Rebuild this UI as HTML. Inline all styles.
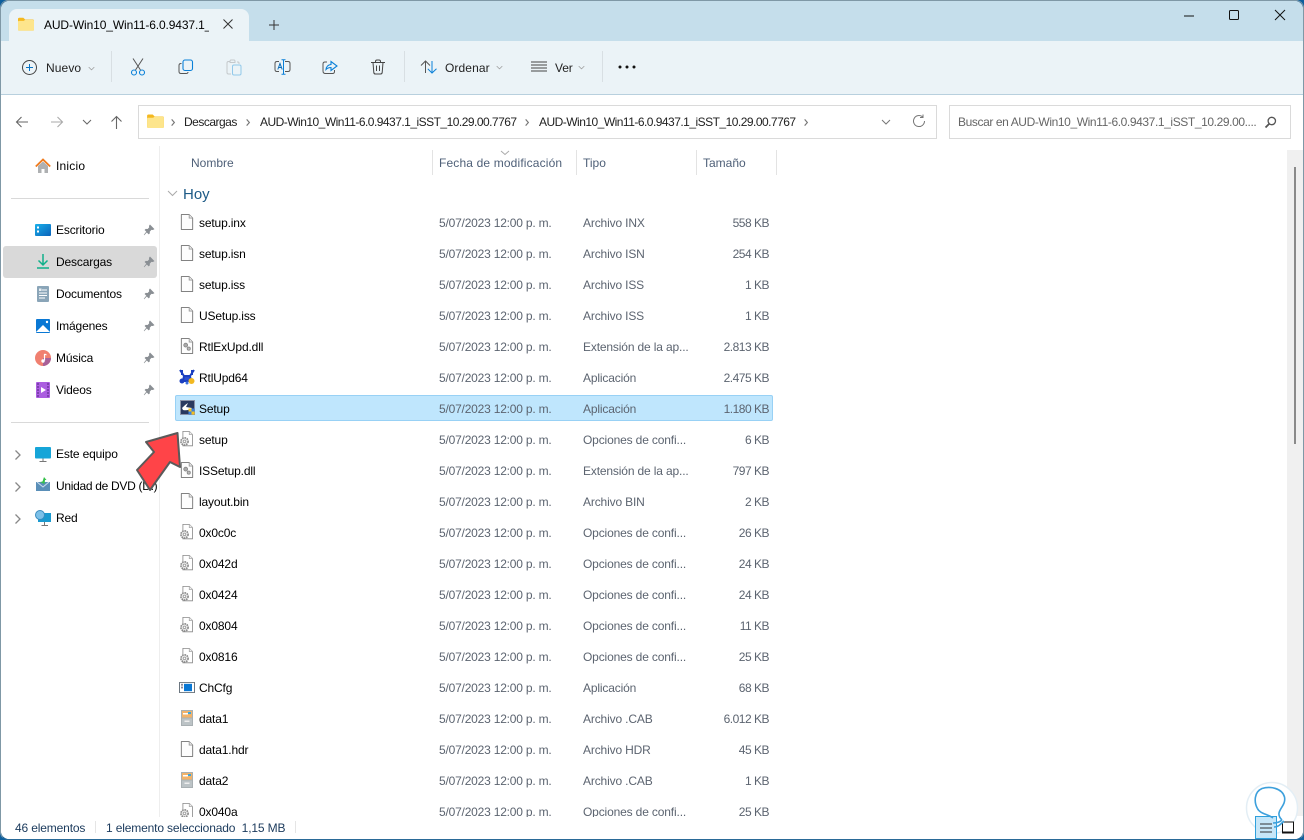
<!DOCTYPE html>
<html lang="es"><head><meta charset="utf-8"><title>Explorador</title>
<style>
html,body{margin:0;padding:0;width:1304px;height:840px;overflow:hidden;background:#0d5f9e}
*{box-sizing:border-box}
body{font-family:"Liberation Sans",sans-serif;font-size:12px;color:#000;position:relative}
.a{position:absolute;white-space:nowrap}
#win{position:absolute;left:1px;top:1px;width:1302px;height:838px;background:#fff;border-radius:8px;overflow:hidden}
#frame{position:absolute;left:0;top:0;width:1304px;height:840px;border:1px solid #7f98a6;border-bottom:1px solid #2a6a98;border-radius:8px;pointer-events:none}
.t{position:absolute;white-space:nowrap;line-height:16px;letter-spacing:-.15px}
.n{left:199px}.d{left:439px;color:#5c6470;letter-spacing:-.2px}.y{left:583px;color:#5c6470}.s{left:669px;width:100px;text-align:right;color:#5c6470;letter-spacing:-.5px}
.h{color:#4f6078;top:155px;letter-spacing:0}
.sep{position:absolute;width:1px;top:150px;height:25px;background:#e3e3e3}
.ic{position:absolute}
.pin{position:absolute;left:143px}
.f{position:absolute;left:180px;width:14px;height:16px}
.c{position:absolute;left:179px;width:15px;height:16px}
</style></head><body>
<svg width="0" height="0" style="position:absolute">
<symbol id="file" viewBox="0 0 16 18"><path d="M1.500 .5H10.500L14.500 4.500V17.500H1.500Z" fill="#fdfdfd" stroke="#707070" stroke-linejoin="round"/><path d="M10.500 .5V4.500H14.500" fill="#eee" stroke="#999"/></symbol>
<symbol id="dll" viewBox="0 0 16 18"><path d="M1.500 .5H10.500L14.500 4.500V17.500H1.500Z" fill="#fdfdfd" stroke="#707070" stroke-linejoin="round"/><path d="M10.500 .5V4.500H14.500" fill="#eee" stroke="#999"/><circle cx="6.500" cy="8" r="2.200" fill="#aaa" stroke="#888"/><circle cx="10" cy="12" r="1.800" fill="#bbb" stroke="#888"/></symbol>
<symbol id="cfg" viewBox="0 0 18 20"><path d="M4.500 .5H12.500L16.500 4.500V18.500H4.500Z" fill="#fff" stroke="#888"/><path d="M12.500 .5V4.500H16.500" fill="#eee" stroke="#aaa"/><circle cx="6.500" cy="13" r="4.500" fill="#e8e8e8" stroke="#888" stroke-width="2" stroke-dasharray="2 1"/><circle cx="6.500" cy="13" r="1.600" fill="#fff" stroke="#999"/></symbol>
<symbol id="cab" viewBox="0 0 12 16"><rect width="12" height="16" fill="#a9b0b3"/><rect x="1" y="1" width="10" height="6.500" fill="#f2b36a"/><rect x="2" y="3" width="5" height="1.500" fill="#fff"/><rect x="7" y="2" width="3" height="2" fill="#38a6e0"/><rect x="1" y="8.500" width="10" height="6.500" fill="#bcc3c6"/><rect x="3.500" y="10.500" width="5" height="1.500" fill="#eee"/></symbol>
<symbol id="pin" viewBox="0 0 12 12"><path d="M7 1L11 5L9.800 5.700L8.300 5.500L6.500 7.500L6.500 9.300L5.700 10L3.800 8.100L1.200 10.800L1 11L3.700 7.600L2 6L2.800 5.200L4.700 5.300L6.500 3.500L6.300 2Z" fill="#8a8f94" stroke="#8a8f94" stroke-width=".6"/></symbol>
<symbol id="folder" viewBox="0 0 18 15"><path d="M0 2Q0 .5 1.500 .5H6L8 2.500H16.500Q18 2.500 18 4V13.500Q18 15 16.500 15H1.500Q0 15 0 13.500Z" fill="#f4b81f"/><path d="M0 5Q0 4 1 4H6.500L8 2.800H16.500Q18 2.800 18 4.300V13.500Q18 15 16.500 15H1.500Q0 15 0 13.500Z" fill="#fde58c"/></symbol>
<symbol id="chev" viewBox="0 0 10 6"><path d="M1 1L5 5L9 1" fill="none" stroke="#999" stroke-width="1"/></symbol>
<symbol id="crumb" viewBox="0 0 6 10"><path d="M1.500 1.500L4.500 5L1.500 8.500" fill="none" stroke="#777" stroke-width="1.300"/></symbol>
<symbol id="side" viewBox="0 0 8 12"><path d="M1.500 1.500L6 6L1.500 10.500" fill="none" stroke="#888" stroke-width="1.300"/></symbol>
</svg>
<div id="win">
<div class="a" style="left:-1px;top:-1px;width:1304px;height:41px;background:#c5deeb"></div>
<div class="a" style="left:-1px;top:40px;width:1304px;height:54px;background:#ebf3f7;border-bottom:1px solid #b8d0de"></div>
<div class="a" style="left:8px;top:8px;width:240px;height:32px;background:#ebf3f7;border-radius:8px 8px 0 0"></div>
</div>
<div id="frame"></div>

<!-- tab -->
<svg class="ic" style="left:18px;top:17px" width="16" height="14"><use href="#folder"/></svg>
<div class="t" style="left:44px;top:17px;font-size:12px;letter-spacing:-.12px;width:165px;overflow:hidden">AUD-Win10_Win11-6.0.9437.1_</div>
<svg class="ic" style="left:222px;top:18px" width="12" height="12"><path d="M1.500 1.500L10.500 10.500M10.500 1.500L1.500 10.500" stroke="#333" stroke-width="1" fill="none"/></svg>
<svg class="ic" style="left:268px;top:19px" width="12" height="12"><path d="M6 1V11M1 6H11" stroke="#333" stroke-width="1" fill="none"/></svg>

<!-- window controls -->
<svg class="ic" style="left:1183px;top:15px" width="12" height="2"><path d="M1 1H11" stroke="#111" stroke-width="1"/></svg>
<svg class="ic" style="left:1228px;top:9px" width="12" height="12"><rect x="1.500" y="1.500" width="9" height="9" rx="1" fill="none" stroke="#111"/></svg>
<svg class="ic" style="left:1274px;top:9px" width="12" height="12"><path d="M1 1L11 11M11 1L1 11" stroke="#111" stroke-width="1" fill="none"/></svg>

<!-- toolbar -->
<svg class="ic" style="left:21px;top:59px" width="17" height="17"><circle cx="8.500" cy="8.500" r="7" fill="none" stroke="#444"/><path d="M8.500 5V12M5 8.500H12" stroke="#0a74c4" stroke-width="1"/></svg>
<div class="t" style="left:46px;top:60px;color:#222;letter-spacing:.1px">Nuevo</div>
<svg class="ic" style="left:88px;top:66px" width="7" height="5"><use href="#chev"/></svg>
<div class="a" style="left:111px;top:51px;width:1px;height:31px;background:#d8dfe3"></div>
<svg class="ic" style="left:130px;top:58px" width="16" height="18"><path d="M3 .5L10.500 12M13 .5L5.500 12" stroke="#555" fill="none"/><circle cx="4" cy="14.500" r="2.500" fill="none" stroke="#0a80d8" stroke-width="1.100"/><circle cx="12" cy="14.500" r="2.500" fill="none" stroke="#0a80d8" stroke-width="1.100"/></svg>
<svg class="ic" style="left:178px;top:59px" width="16" height="16"><rect x="5" y="1" width="9.500" height="10.500" rx="2" fill="none" stroke="#0a80d8" stroke-width="1.100"/><path d="M3.500 4.500H3Q1 4.500 1 6.500V12.500Q1 14.500 3 14.500H8Q10 14.500 10 13" fill="none" stroke="#555"/></svg>
<svg class="ic" style="left:226px;top:59px" width="16" height="17"><path d="M4 2.500H2.500Q1 2.500 1 4V13.500Q1 15 2.500 15H5" fill="none" stroke="#c4c8cb"/><path d="M4 2.500Q4 1 5 1H8Q9 1 9 2.500V3.500H4Z" fill="none" stroke="#c4c8cb"/><path d="M11 3H12Q13 3 13 4V5" fill="none" stroke="#c4c8cb"/><rect x="6.500" y="6" width="8.500" height="10" rx="1.500" fill="none" stroke="#92c8ea"/></svg>
<svg class="ic" style="left:274px;top:59px" width="17" height="16"><path d="M5 2.500H3Q1 2.500 1 4.500V10.500Q1 12.500 3 12.500H5M11 2.500H14Q16 2.500 16 4.500V10.500Q16 12.500 14 12.500H11" fill="none" stroke="#555"/><path d="M9.500 1V15M7.500 .7H11.500M7.500 15.300H11.500" stroke="#0a80d8" fill="none"/><path d="M3.800 10.500L6 4.500L8.200 10.500M4.600 8.500H7.400" stroke="#0a6cb8" fill="none"/></svg>
<svg class="ic" style="left:322px;top:59px" width="16" height="16"><path d="M5 3H3Q1 3 1 5V12Q1 14.500 3.500 14.500H10.500Q12.500 14.500 12.500 12.500V11" fill="none" stroke="#555"/><path d="M4 10.500Q4.500 6 9 5.500V2.500L15 7L9 11.500V8.500Q6 8.500 4 10.500Z" fill="none" stroke="#0a80d8" stroke-width="1.100"/></svg>
<svg class="ic" style="left:370px;top:59px" width="16" height="16"><path d="M1 3.500H15M5.500 3.500V2.500Q5.500 1 7 1H9Q10.500 1 10.500 2.500V3.500M3 3.500L3.800 13.500Q4 15 5.500 15H10.500Q12 15 12.200 13.500L13 3.500M6.500 6.500V12M9.500 6.500V12" fill="none" stroke="#444"/></svg>
<div class="a" style="left:404px;top:51px;width:1px;height:31px;background:#d8dfe3"></div>
<svg class="ic" style="left:420px;top:60px" width="18" height="14"><path d="M5.500 13V1M1 5.500L5.500 1L10 5.500" fill="none" stroke="#555"/><path d="M12 1V13M7.800 8.800L12 13L16.500 8.800" fill="none" stroke="#0a80d8"/></svg>
<div class="t" style="left:445px;top:60px;color:#222;letter-spacing:.1px">Ordenar</div>
<svg class="ic" style="left:496px;top:65px" width="7" height="5"><use href="#chev"/></svg>
<svg class="ic" style="left:531px;top:61px" width="16" height="11"><path d="M0 1H16M0 4H16M0 7H16M0 10H16" stroke="#444" stroke-width=".9"/></svg>
<div class="t" style="left:555px;top:60px;color:#222">Ver</div>
<svg class="ic" style="left:578px;top:65px" width="7" height="5"><use href="#chev"/></svg>
<div class="a" style="left:602px;top:51px;width:1px;height:31px;background:#d8dfe3"></div>
<svg class="ic" style="left:618px;top:65px" width="18" height="4"><circle cx="2" cy="2" r="1.500" fill="#111"/><circle cx="9" cy="2" r="1.500" fill="#111"/><circle cx="16" cy="2" r="1.500" fill="#111"/></svg>

<!-- nav buttons -->
<svg class="ic" style="left:15px;top:115px" width="14" height="14"><path d="M13 7H1.500M6.500 2L1.500 7L6.500 12" fill="none" stroke="#666" stroke-width="1.100"/></svg>
<svg class="ic" style="left:50px;top:115px" width="14" height="14"><path d="M1 7H12.500M7.500 2L12.500 7L7.500 12" fill="none" stroke="#aaa" stroke-width="1.100"/></svg>
<svg class="ic" style="left:82px;top:119px" width="10" height="6"><path d="M1 1L5 5L9 1" fill="none" stroke="#666" stroke-width="1"/></svg>
<svg class="ic" style="left:110px;top:115px" width="13" height="14"><path d="M6.500 14V1.500M1.500 6.500L6.500 1.500L11.500 6.500" fill="none" stroke="#666" stroke-width="1.100"/></svg>

<!-- address -->
<div class="a" style="left:138px;top:105px;width:799px;height:34px;border:1px solid #dadada;background:#fff"></div>
<svg class="ic" style="left:147px;top:114px" width="17" height="14"><use href="#folder"/></svg>
<svg class="ic" style="left:170px;top:118px" width="6" height="9"><use href="#crumb"/></svg>
<div class="t" style="left:184px;top:114px;color:#222;letter-spacing:-.5px">Descargas</div>
<svg class="ic" style="left:245px;top:118px" width="6" height="9"><use href="#crumb"/></svg>
<div class="t" style="left:260px;top:114px;color:#222;letter-spacing:-.52px">AUD-Win10_Win11-6.0.9437.1_iSST_10.29.00.7767</div>
<svg class="ic" style="left:524px;top:118px" width="6" height="9"><use href="#crumb"/></svg>
<div class="t" style="left:539px;top:114px;color:#222;letter-spacing:-.52px">AUD-Win10_Win11-6.0.9437.1_iSST_10.29.00.7767</div>
<svg class="ic" style="left:803px;top:118px" width="6" height="9"><use href="#crumb"/></svg>
<svg class="ic" style="left:881px;top:119px" width="10" height="6"><path d="M1 1L5 5L9 1" fill="none" stroke="#777"/></svg>
<svg class="ic" style="left:912px;top:114px" width="14" height="14"><path d="M12.500 7A5.500 5.500 0 1 1 10.500 2.800M11 .5V3.500H8" fill="none" stroke="#777"/></svg>
<div class="a" style="left:949px;top:105px;width:342px;height:34px;border:1px solid #dadada;background:#fff"></div>
<div class="t" style="left:958px;top:114px;color:#666;letter-spacing:-.4px">Buscar en AUD-Win10_Win11-6.0.9437.1_iSST_10.29.00....</div>
<svg class="ic" style="left:1264px;top:116px" width="13" height="13"><circle cx="7.800" cy="5" r="3.700" fill="none" stroke="#555" stroke-width="1.300"/><path d="M5 8L1.500 11.500" stroke="#555" stroke-width="1.800"/></svg>

<!-- sidebar -->
<div class="a" style="left:159px;top:146px;width:1px;height:671px;background:#eeeeee"></div>
<div class="a" style="left:3px;top:246px;width:154px;height:32px;background:#d9d9d9;border-radius:3px"></div>
<div class="a" style="left:11px;top:198px;width:138px;height:1px;background:#d9d9d9"></div>
<div class="a" style="left:11px;top:422px;width:138px;height:1px;background:#d9d9d9"></div>

<svg class="ic" style="left:35px;top:158px" width="16" height="16" viewBox="0 0 16 16"><path d="M3 8V15H6.500V11H9.500V15H13V8L8 3.500Z" fill="#aeb0b2"/><path d="M.8 8.500L8 1.500L15.200 8.500" fill="none" stroke="#f07a1c" stroke-width="1.800"/></svg>
<div class="t" style="left:56px;top:158px;letter-spacing:.2px">Inicio</div>

<svg class="ic" style="left:35px;top:224px" width="16" height="12"><defs><linearGradient id="dsk" x1="0" x2="1" y1="0" y2="1"><stop offset="0" stop-color="#1ab0ea"/><stop offset="1" stop-color="#0a62ba"/></linearGradient></defs><rect width="16" height="12" rx="1" fill="url(#dsk)"/><rect x="2" y="2.500" width="2" height="2" fill="#fff"/><rect x="2" y="6.500" width="2" height="2" fill="#fff"/></svg>
<div class="t" style="left:56px;top:222px">Escritorio</div>

<svg class="ic" style="left:37px;top:254px" width="12" height="15"><path d="M6 0V11M1.500 6.500L6 11L10.500 6.500" fill="none" stroke="#10b08a" stroke-width="1.500"/><path d="M0 14H12" stroke="#10b08a" stroke-width="1.500"/></svg>
<div class="t" style="left:56px;top:254px">Descargas</div>

<svg class="ic" style="left:37px;top:286px" width="12" height="16"><rect width="12" height="16" rx="1" fill="#8aa5b8"/><path d="M5 4H10M2 7H10M2 9.500H10M2 12H8" stroke="#fff"/><rect x="2" y="2.500" width="2.500" height="2.500" fill="#e8eef2"/></svg>
<div class="t" style="left:56px;top:286px">Documentos</div>

<svg class="ic" style="left:36px;top:319px" width="14" height="14"><rect width="14" height="14" rx="1" fill="#0a78d4"/><path d="M0 13L7 6L14 13Z" fill="#fff"/><circle cx="11" cy="3" r="1.200" fill="#fff"/></svg>
<div class="t" style="left:56px;top:318px">Imágenes</div>

<svg class="ic" style="left:35px;top:350px" width="16" height="16"><circle cx="8" cy="8" r="8" fill="#f08070"/><path d="M8 8L16 8A8 8 0 0 1 8 16Z" fill="#a86098"/><path d="M9.500 4V10.500" stroke="#fff" stroke-width="1.200"/><circle cx="8" cy="11" r="1.700" fill="#fff"/><path d="M9.500 4L11.500 5" stroke="#fff"/></svg>
<div class="t" style="left:56px;top:350px">Música</div>

<svg class="ic" style="left:36px;top:382px" width="14" height="16"><rect width="14" height="16" rx="1" fill="#ab5ee0"/><path d="M1 2H3M1 5H3M1 8H3M1 11H3M1 14H3M11 2H13M11 5H13M11 8H13M11 11H13M11 14H13" stroke="#502080"/><path d="M5 5V11L10 8Z" fill="#fff"/></svg>
<div class="t" style="left:56px;top:382px">Videos</div>

<svg class="pin" style="top:224px" width="12" height="12"><use href="#pin"/></svg>
<svg class="pin" style="top:256px" width="12" height="12"><use href="#pin"/></svg>
<svg class="pin" style="top:288px" width="12" height="12"><use href="#pin"/></svg>
<svg class="pin" style="top:320px" width="12" height="12"><use href="#pin"/></svg>
<svg class="pin" style="top:352px" width="12" height="12"><use href="#pin"/></svg>
<svg class="pin" style="top:384px" width="12" height="12"><use href="#pin"/></svg>

<svg class="ic" style="left:14px;top:449px" width="8" height="12"><use href="#side"/></svg>
<svg class="ic" style="left:14px;top:481px" width="8" height="12"><use href="#side"/></svg>
<svg class="ic" style="left:14px;top:513px" width="8" height="12"><use href="#side"/></svg>
<svg class="ic" style="left:35px;top:447px" width="16" height="15"><rect width="16" height="11.500" rx="1" fill="#16a5d8"/><path d="M8 11.500V14M4.500 14.500H11.500" stroke="#777"/></svg>
<div class="t" style="left:56px;top:446px">Este equipo</div>
<svg class="ic" style="left:36px;top:477px" width="15" height="15"><rect x="0" y="5" width="14" height="9" fill="#5a8fb8"/><path d="M1 5L7 10L13 5" stroke="#cde" fill="none"/><path d="M8 0L10.500 3H9L8.500 7L4 5L6.500 4.500Z" fill="#35c04a"/></svg>
<div class="t" style="left:56px;top:478px;letter-spacing:-.3px">Unidad de DVD (D:)</div>
<svg class="ic" style="left:35px;top:510px" width="16" height="16"><rect x="3" y="3" width="13" height="9" fill="#1a9ad0"/><path d="M9.500 12V15M6.500 15.500H13" stroke="#777"/><circle cx="5" cy="5" r="4.500" fill="#7cc0e8" stroke="#3a8cc0"/></svg>
<div class="t" style="left:56px;top:510px">Red</div>

<!-- headers -->
<svg class="ic" style="left:500px;top:150px" width="10" height="6"><path d="M1 1L5 4.500L9 1" fill="none" stroke="#aaa"/></svg>
<div class="t h" style="left:191px">Nombre</div>
<div class="t h" style="left:439px;letter-spacing:.15px">Fecha de modificación</div>
<div class="t h" style="left:583px">Tipo</div>
<div class="t h" style="left:703px">Tamaño</div>
<div class="sep" style="left:432px"></div><div class="sep" style="left:576px"></div><div class="sep" style="left:696px"></div><div class="sep" style="left:776px"></div>

<svg class="ic" style="left:167px;top:190px" width="11" height="7"><path d="M1 1L5.500 5.500L10 1" fill="none" stroke="#aaa"/></svg>
<div class="t" style="left:183px;top:186px;font-size:15px;color:#1d5a86;line-height:18px;letter-spacing:0">Hoy</div>

<!-- selection -->
<div class="a" style="left:175px;top:395px;width:598px;height:26px;background:#bfe6fd;border:1px solid #98d1f5;border-radius:2px"></div>

<!-- rows -->
<svg class="f" style="top:214px"><use href="#file"/></svg>
<div class="t n" style="top:215px">setup.inx</div><div class="t d" style="top:215px">5/07/2023 12:00 p. m.</div><div class="t y" style="top:215px">Archivo INX</div><div class="t s" style="top:215px">558 KB</div>
<svg class="f" style="top:245px"><use href="#file"/></svg>
<div class="t n" style="top:246px">setup.isn</div><div class="t d" style="top:246px">5/07/2023 12:00 p. m.</div><div class="t y" style="top:246px">Archivo ISN</div><div class="t s" style="top:246px">254 KB</div>
<svg class="f" style="top:276px"><use href="#file"/></svg>
<div class="t n" style="top:277px">setup.iss</div><div class="t d" style="top:277px">5/07/2023 12:00 p. m.</div><div class="t y" style="top:277px">Archivo ISS</div><div class="t s" style="top:277px">1 KB</div>
<svg class="f" style="top:307px"><use href="#file"/></svg>
<div class="t n" style="top:308px">USetup.iss</div><div class="t d" style="top:308px">5/07/2023 12:00 p. m.</div><div class="t y" style="top:308px">Archivo ISS</div><div class="t s" style="top:308px">1 KB</div>
<svg class="f" style="top:338px"><use href="#dll"/></svg>
<div class="t n" style="top:339px">RtlExUpd.dll</div><div class="t d" style="top:339px">5/07/2023 12:00 p. m.</div><div class="t y" style="top:339px">Extensión de la ap...</div><div class="t s" style="top:339px">2.813 KB</div>
<svg class="ic" style="left:179px;top:369px" width="16" height="16" viewBox="0 0 16 16"><path d="M1 1L5 7M15 1L11 7M3 1V6M13 1V6M5 7H11L12 12H4Z" fill="#2a4fd0" stroke="#1a3fc0" stroke-width="2"/><circle cx="3" cy="12" r="2.500" fill="#1a3fc0"/><circle cx="12.500" cy="12" r="3" fill="#f2b820"/><circle cx="8" cy="14" r="1.500" fill="#3a70e0"/></svg>
<div class="t n" style="top:370px">RtlUpd64</div><div class="t d" style="top:370px">5/07/2023 12:00 p. m.</div><div class="t y" style="top:370px">Aplicación</div><div class="t s" style="top:370px">2.475 KB</div>
<svg class="ic" style="left:180px;top:400px" width="15" height="15" viewBox="0 0 15 15"><rect width="15" height="15" fill="#2a3a60"/><rect x=".5" y=".5" width="14" height="14" fill="none" stroke="#8a93a8"/><path d="M2 8Q6 4 8 3L6 7L12 8Q8 11 3 10Z" fill="#fff"/><rect x="8.500" y="8.500" width="3" height="3" fill="#f6c21c"/><rect x="11.500" y="11.500" width="3" height="3" fill="#f6c21c"/><rect x="11.500" y="8.500" width="3" height="3" fill="#3a80e0"/><rect x="8.500" y="11.500" width="3" height="3" fill="#3a80e0"/></svg>
<div class="t n" style="top:401px">Setup</div><div class="t d" style="top:401px">5/07/2023 12:00 p. m.</div><div class="t y" style="top:401px">Aplicación</div><div class="t s" style="top:401px">1.180 KB</div>
<svg class="c" style="top:431px"><use href="#cfg"/></svg>
<div class="t n" style="top:432px">setup</div><div class="t d" style="top:432px">5/07/2023 12:00 p. m.</div><div class="t y" style="top:432px">Opciones de confi...</div><div class="t s" style="top:432px">6 KB</div>
<svg class="f" style="top:462px"><use href="#dll"/></svg>
<div class="t n" style="top:463px">ISSetup.dll</div><div class="t d" style="top:463px">5/07/2023 12:00 p. m.</div><div class="t y" style="top:463px">Extensión de la ap...</div><div class="t s" style="top:463px">797 KB</div>
<svg class="f" style="top:493px"><use href="#file"/></svg>
<div class="t n" style="top:494px">layout.bin</div><div class="t d" style="top:494px">5/07/2023 12:00 p. m.</div><div class="t y" style="top:494px">Archivo BIN</div><div class="t s" style="top:494px">2 KB</div>
<svg class="c" style="top:524px"><use href="#cfg"/></svg>
<div class="t n" style="top:525px">0x0c0c</div><div class="t d" style="top:525px">5/07/2023 12:00 p. m.</div><div class="t y" style="top:525px">Opciones de confi...</div><div class="t s" style="top:525px">26 KB</div>
<svg class="c" style="top:555px"><use href="#cfg"/></svg>
<div class="t n" style="top:556px">0x042d</div><div class="t d" style="top:556px">5/07/2023 12:00 p. m.</div><div class="t y" style="top:556px">Opciones de confi...</div><div class="t s" style="top:556px">24 KB</div>
<svg class="c" style="top:586px"><use href="#cfg"/></svg>
<div class="t n" style="top:587px">0x0424</div><div class="t d" style="top:587px">5/07/2023 12:00 p. m.</div><div class="t y" style="top:587px">Opciones de confi...</div><div class="t s" style="top:587px">24 KB</div>
<svg class="c" style="top:617px"><use href="#cfg"/></svg>
<div class="t n" style="top:618px">0x0804</div><div class="t d" style="top:618px">5/07/2023 12:00 p. m.</div><div class="t y" style="top:618px">Opciones de confi...</div><div class="t s" style="top:618px">11 KB</div>
<svg class="c" style="top:648px"><use href="#cfg"/></svg>
<div class="t n" style="top:649px">0x0816</div><div class="t d" style="top:649px">5/07/2023 12:00 p. m.</div><div class="t y" style="top:649px">Opciones de confi...</div><div class="t s" style="top:649px">25 KB</div>
<svg class="ic" style="left:179px;top:682px" width="16" height="11" viewBox="0 0 16 12" preserveAspectRatio="none"><rect width="16" height="12" fill="#6b7680"/><rect x="1" y="1" width="14" height="10" fill="#fff"/><rect x="5" y="2" width="8" height="8" fill="#0a78d4"/><rect x="2" y="2" width="2" height="2" fill="#889"/><rect x="2" y="5" width="2" height="2" fill="#889"/></svg>
<div class="t n" style="top:680px">ChCfg</div><div class="t d" style="top:680px">5/07/2023 12:00 p. m.</div><div class="t y" style="top:680px">Aplicación</div><div class="t s" style="top:680px">68 KB</div>
<svg class="ic" style="left:181px;top:710px" width="12" height="16"><use href="#cab"/></svg>
<div class="t n" style="top:711px">data1</div><div class="t d" style="top:711px">5/07/2023 12:00 p. m.</div><div class="t y" style="top:711px">Archivo .CAB</div><div class="t s" style="top:711px">6.012 KB</div>
<svg class="f" style="top:741px"><use href="#file"/></svg>
<div class="t n" style="top:742px">data1.hdr</div><div class="t d" style="top:742px">5/07/2023 12:00 p. m.</div><div class="t y" style="top:742px">Archivo HDR</div><div class="t s" style="top:742px">45 KB</div>
<svg class="ic" style="left:181px;top:772px" width="12" height="16"><use href="#cab"/></svg>
<div class="t n" style="top:773px">data2</div><div class="t d" style="top:773px">5/07/2023 12:00 p. m.</div><div class="t y" style="top:773px">Archivo .CAB</div><div class="t s" style="top:773px">1 KB</div>
<svg class="c" style="top:803px"><use href="#cfg"/></svg>
<div class="t n" style="top:804px">0x040a</div><div class="t d" style="top:804px">5/07/2023 12:00 p. m.</div><div class="t y" style="top:804px">Opciones de confi...</div><div class="t s" style="top:804px">25 KB</div>

<!-- scrollbar -->
<div class="a" style="left:1287px;top:150px;width:16px;height:666px;background:#f0f0f0"></div>
<div class="a" style="left:1294px;top:167px;width:2px;height:277px;background:#8a8a8a"></div>

<!-- status bar -->
<div class="a" style="left:1px;top:817px;width:1302px;height:22px;background:#fff;border-radius:0 0 8px 8px"></div>
<div class="a" style="left:95px;top:821px;width:1px;height:12px;background:#e5e5e5"></div>
<div class="a" style="left:295px;top:821px;width:1px;height:12px;background:#e5e5e5"></div>
<div class="t" style="left:15px;top:820px;color:#1b3a5c">46 elementos</div>
<div class="t" style="left:106px;top:820px;color:#1b3a5c">1 elemento seleccionado&nbsp; 1,15 MB</div>

<!-- view buttons + watermark -->
<svg class="ic" style="left:1240px;top:780px" width="64" height="60" viewBox="0 0 64 60">
<circle cx="32" cy="28" r="25.500" fill="#fff" fill-opacity=".92" stroke="#e3eef5" stroke-width="1.500"/>
<rect x="15.500" y="36.500" width="21" height="22" fill="#c6e6f8" stroke="#2ea0dc"/>
<path d="M20 44H32M20 48H32M20 52H32" stroke="#333" stroke-width="1"/>
<rect x="42.500" y="42" width="11" height="10" fill="#fff" stroke="#111"/><path d="M42 53H54" stroke="#111"/>
<path d="M17.300 28.300C14 22 14 12 22 8.500C30 6 42 8 44.500 17C46 24 40 28 39 33C38.500 36 40 38 42 40M17.300 28.300C20 34 28 34 33 38M33 43C37 43 40 42 42 40M34 47C38 47 40 45 44 41" fill="none" stroke="#3da0dc" stroke-width="1.600"/>
</svg>

<!-- red arrow -->
<svg class="ic" style="left:130px;top:425px" width="60" height="70" viewBox="0 0 60 70">
<path d="M47.500 8L16 17L24 27L7 45L20 65L40 37L50 42Z" fill="#ff4448" stroke="#5a5a5a" stroke-width="2" stroke-linejoin="round"/>
</svg>
</body></html>
